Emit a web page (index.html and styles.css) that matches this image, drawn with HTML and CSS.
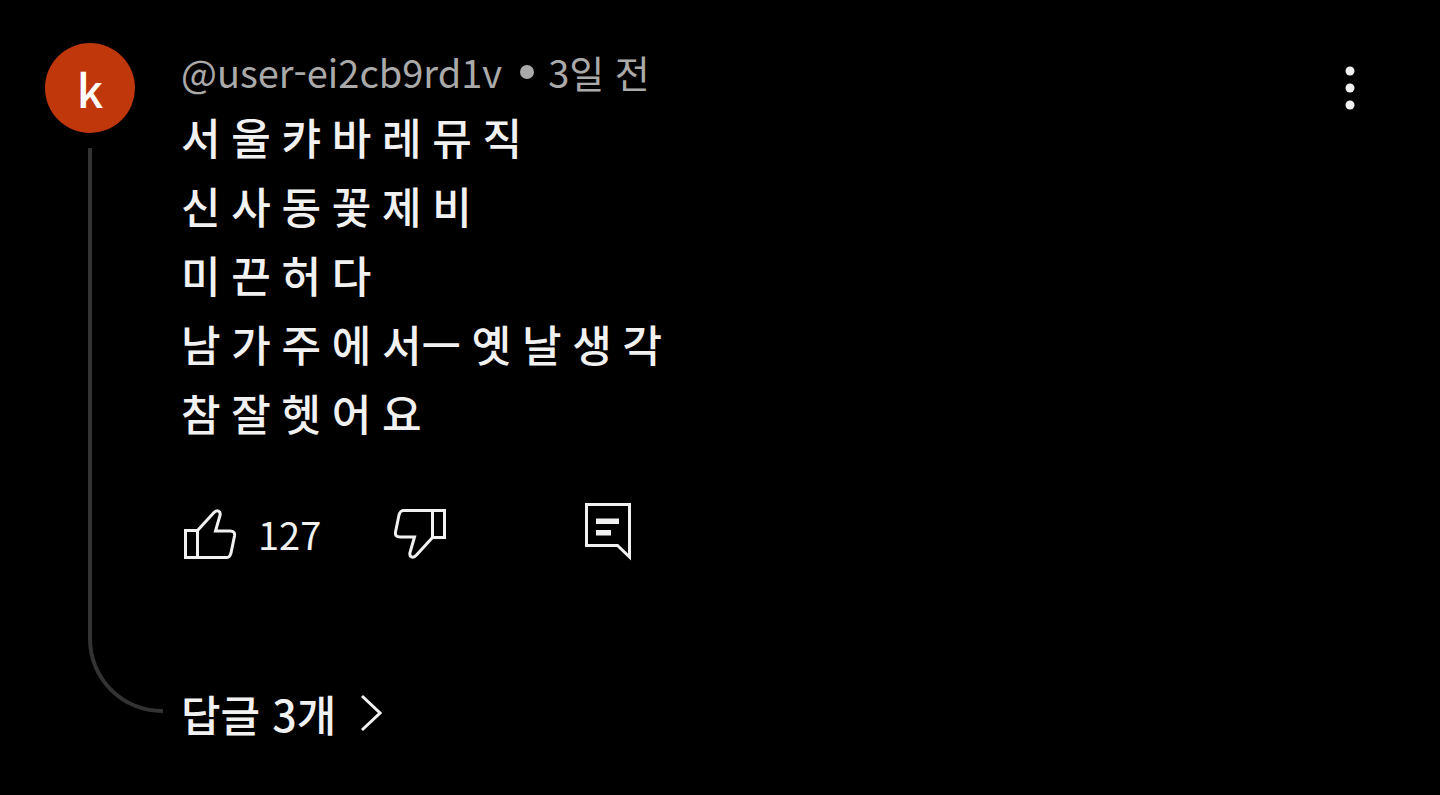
FILE: index.html
```html
<!DOCTYPE html>
<html lang="ko">
<head>
<meta charset="utf-8">
<meta name="viewport" content="width=device-width, initial-scale=1">
<title>댓글</title>
<link rel="stylesheet" href="styles.css">
</head>
<body>
<article class="comment">
  <div class="rail">
    <a class="avatar" href="#">k</a>
    <div class="thread"></div>
  </div>
  <div class="content">
    <header class="meta"><a class="author" href="#">@user-ei2cb9rd1v</a><span class="dot"></span><time>3일 전</time></header>
    <p class="text">서 울 캬 바 레 뮤 직<br>신 사 동 꽃 제 비<br>미 끈 허 다<br>남 가 주 에 서ㅡ 옛 날 생 각<br>참 잘 헷 어 요</p>
    <div class="actions">
      <button class="action like" type="button" aria-label="좋아요">
        <svg class="thumb" viewBox="0 0 52 50" aria-hidden="true"><path d="M1.500 21.500H13.500V48.500H1.500ZM13.500 21.500L29.500 4C33 0 37 2 36 6.500L31.500 22H46C50 22 51 24 50.500 27L47 44C46 47.500 45 48.500 42 48.500H13.500"/></svg>
        <span class="count">127</span>
      </button>
      <button class="action dislike" type="button" aria-label="싫어요">
        <svg class="thumb" viewBox="0 0 52 50" aria-hidden="true"><path d="M50.500 28.500H38.500V1.500H50.500ZM38.500 28.500L22.500 46C19 50 15 48 16 43.500L20.500 28H6C2 28 1 26 1.500 23L5 6C6 2.500 7 1.500 10 1.500H38.500"/></svg>
      </button>
      <button class="action reply" type="button" aria-label="답글">
        <svg class="bubble" viewBox="0 0 48 60" aria-hidden="true"><path class="outline" d="M2.500 2.500H45.500V55L33.500 43.500H2.500Z"/><path class="lines" d="M12 16.500H35V22H12ZM12 28H27V33.500H12Z"/></svg>
      </button>
    </div>
    <a class="replies" href="#">답글 3개<svg class="chevron" viewBox="0 0 22 38" aria-hidden="true"><path d="M2 2L20 19L2 36"/></svg></a>
  </div>
  <button class="menu" type="button" aria-label="더보기">
    <svg class="dots" viewBox="0 0 10 44" aria-hidden="true"><circle cx="5" cy="5" r="4.500"/><circle cx="5" cy="22" r="4.500"/><circle cx="5" cy="39" r="4.500"/></svg>
  </button>
</article>
</body>
</html>
```
FILE: styles.css
```css
body {
  margin: 0;
  background: #000;
  color: #f1f1f1;
  font-family: "Noto Sans CJK KR", sans-serif;
}

a {
  color: inherit;
  text-decoration: none;
}

button {
  padding: 0;
  border: 0;
  background: none;
  color: inherit;
  font: inherit;
  cursor: pointer;
}

svg {
  display: block;
  fill: none;
  stroke: currentColor;
}

.comment {
  display: flex;
  padding: 43px 85px 48px 45px;
}

.rail {
  display: flex;
  flex-direction: column;
  gap: 15px;
  width: 136px;
}

.avatar {
  display: flex;
  align-items: center;
  justify-content: center;
  width: 90px;
  height: 90px;
  border-radius: 50%;
  background: #c1370c;
  color: #fff;
  font-size: 46px;
  font-weight: 500;
  line-height: 88px;
}

.thread {
  flex: 1;
  margin: 0 18px 33px 43px;
  border: solid #333;
  border-width: 0 0 4px 4px;
  border-bottom-left-radius: 74px;
}

.content {
  flex: 1;
}

.meta {
  display: flex;
  align-items: center;
  margin-bottom: 6px;
  color: #aaa;
  font-size: 38px;
  line-height: 57px;
}

.dot {
  width: 14px;
  height: 14px;
  margin: 0 14px 0 18px;
  border-radius: 50%;
  background: #aaa;
}

.text {
  margin: 0;
  font-family: Roboto, "Noto Sans CJK KR", sans-serif;
  font-size: 43px;
  font-weight: 500;
  line-height: 69px;
}

.actions {
  display: flex;
  align-items: center;
  margin-top: 51px;
}

.action {
  display: flex;
  align-items: center;
  height: 64px;
}

.thumb {
  width: 52px;
  height: 50px;
  stroke-width: 3px;
}

.like {
  gap: 22px;
  margin: 0 73px 0 3px;
}

.count {
  font-size: 38px;
  line-height: 60px;
}

.dislike {
  margin-right: 138px;
}

.reply {
  align-items: flex-start;
}

.bubble {
  width: 48px;
  height: 60px;
}

.outline {
  stroke-width: 3px;
}

.lines {
  fill: currentColor;
  stroke: none;
}

.replies {
  display: flex;
  align-items: center;
  gap: 24px;
  margin-top: 114px;
  font-size: 43px;
  font-weight: 500;
  line-height: 66px;
}

.chevron {
  width: 22px;
  height: 38px;
  stroke-width: 3px;
}

.menu {
  align-self: flex-start;
  padding: 23px 0;
}

.dots {
  width: 10px;
  height: 44px;
  fill: currentColor;
  stroke: none;
}
```
